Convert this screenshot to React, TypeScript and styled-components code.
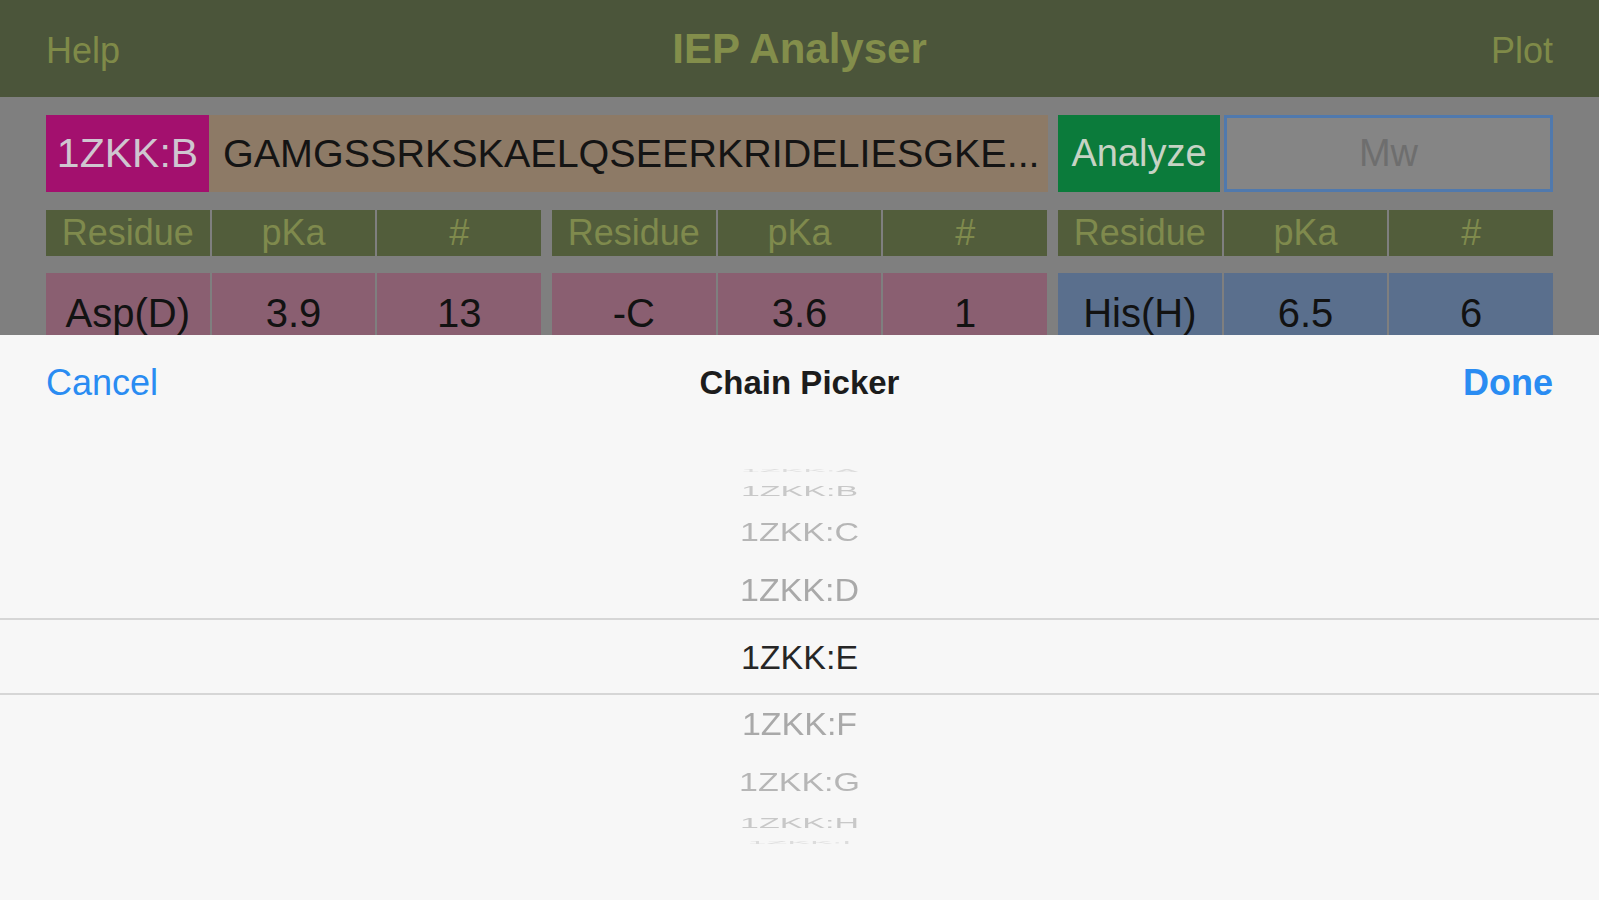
import styled, { createGlobalStyle } from 'styled-components';

const GlobalStyle = createGlobalStyle`
  html, body {
    margin: 0;
    padding: 0;
    overflow: hidden;
    background: #7f7f7f;
  }
  body {
    font-family: "Liberation Sans", Arial, Helvetica, sans-serif;
  }
`;

type Tone = 'acid' | 'base';

interface ResidueRow {
  name: string;
  pka: string;
  count: string;
  tone: Tone;
}

const residues: ResidueRow[] = [
  { name: 'Asp(D)', pka: '3.9', count: '13', tone: 'acid' },
  { name: '-C', pka: '3.6', count: '1', tone: 'acid' },
  { name: 'His(H)', pka: '6.5', count: '6', tone: 'base' },
];

const chains = ['1ZKK:A', '1ZKK:B', '1ZKK:C', '1ZKK:D', '1ZKK:E', '1ZKK:F', '1ZKK:G', '1ZKK:H', '1ZKK:I'];
const SELECTED = 4;
const RADIUS = 190;
const STEP = 21;

const toRad = (deg: number) => (deg * Math.PI) / 180;
const clamp = (v: number) => Math.max(-90, Math.min(90, v));

const shades = ['#262626', '#a9a9a9', '#b6b6b6', '#c8c8c8', '#dcdcdc'];

export default function App() {
  return (
    <Page>
      <GlobalStyle />
      <NavBar>
        <NavLink>Help</NavLink>
        <Title>IEP Analyser</Title>
        <NavLink $right>Plot</NavLink>
      </NavBar>

      <Content>
        <InputRow>
          <ChainTag>1ZKK:B</ChainTag>
          <Sequence>GAMGSSRKSKAELQSEERKRIDELIESGKE...</Sequence>
          <AnalyzeButton>Analyze</AnalyzeButton>
          <MwField>Mw</MwField>
        </InputRow>

        <TableRow>
          {[0, 1, 2].map((g) => (
            <Group key={g}>
              <HeadCell>Residue</HeadCell>
              <HeadCell>pKa</HeadCell>
              <HeadCell>#</HeadCell>
            </Group>
          ))}
        </TableRow>

        <DataRow>
          {residues.map((r) => (
            <Group key={r.name}>
              <DataCell $tone={r.tone}>{r.name}</DataCell>
              <DataCell $tone={r.tone}>{r.pka}</DataCell>
              <DataCell $tone={r.tone}>{r.count}</DataCell>
            </Group>
          ))}
        </DataRow>
      </Content>

      <Sheet>
        <Toolbar>
          <ToolButton>Cancel</ToolButton>
          <SheetTitle>Chain Picker</SheetTitle>
          <ToolButton $bold>Done</ToolButton>
        </Toolbar>

        <Picker>
          <SelectionLine style={{ top: 187 }} />
          <SelectionLine style={{ top: 262 }} />
          <Wheel>
            {chains.map((c, i) => {
              const offset = i - SELECTED;
              const angle = offset * STEP;
              const lo = clamp(angle - STEP / 2);
              const hi = clamp(angle + STEP / 2);
              const h = RADIUS * (Math.sin(toRad(hi)) - Math.sin(toRad(lo)));
              const scale = Math.cos(toRad(angle));
              const dist = Math.abs(offset);
              return (
                <WheelItem key={c} style={{ height: h }}>
                  <WheelText
                    $blur={dist >= 3}
                    style={{ transform: `scaleY(${scale})`, color: shades[dist] }}
                  >
                    {c}
                  </WheelText>
                </WheelItem>
              );
            })}
          </Wheel>
        </Picker>
      </Sheet>
    </Page>
  );
}

const Page = styled.div`
  position: relative;
  width: 100vw;
  height: 100vh;
  background: #7f7f7f;
  overflow: hidden;
`;

const NavBar = styled.header`
  height: 97px;
  background: #4b553a;
  display: grid;
  grid-template-columns: 1fr auto 1fr;
  align-items: center;
  padding: 0 46px;
  box-sizing: border-box;
`;

const NavLink = styled.span<{ $right?: boolean }>`
  font-size: 36px;
  color: #7f8a48;
  padding-top: 4px;
  justify-self: ${(p) => (p.$right ? 'end' : 'start')};
`;

const Title = styled.h1`
  margin: 0;
  font-size: 42px;
  font-weight: bold;
  color: #838e4b;
`;

const Content = styled.main`
  padding: 18px 46px 0 46px;
  display: flex;
  flex-direction: column;
`;

const InputRow = styled.div`
  height: 77px;
  display: flex;
  align-items: stretch;
`;

const ChainTag = styled.div`
  width: 163px;
  background: #a3106e;
  color: #cfc6d0;
  font-size: 41px;
  display: flex;
  align-items: center;
  justify-content: center;
`;

const Sequence = styled.div`
  flex: 1;
  min-width: 0;
  background: #8d7a66;
  color: #141414;
  font-size: 39.5px;
  display: flex;
  align-items: center;
  padding-left: 14px;
  white-space: nowrap;
  overflow: hidden;
`;

const AnalyzeButton = styled.div`
  width: 162px;
  margin-left: 10px;
  background: #0b7b3b;
  color: #c6d3c4;
  font-size: 38px;
  display: flex;
  align-items: center;
  justify-content: center;
`;

const MwField = styled.div`
  width: 329px;
  margin-left: 4px;
  box-sizing: border-box;
  border: 3px solid #5079ad;
  background: #858585;
  color: #6e6e6e;
  font-size: 38px;
  display: flex;
  align-items: center;
  justify-content: center;
`;

const TableRow = styled.div`
  margin-top: 18px;
  height: 46px;
  display: grid;
  grid-template-columns: repeat(3, 1fr);
  column-gap: 11px;
`;

const DataRow = styled(TableRow)`
  margin-top: 17px;
  height: 77px;
`;

const Group = styled.div`
  display: grid;
  grid-template-columns: repeat(3, 1fr);
  column-gap: 2px;
`;

const HeadCell = styled.div`
  background: #525d3b;
  color: #7f8a4d;
  font-size: 36px;
  display: flex;
  align-items: center;
  justify-content: center;
  overflow: hidden;
`;

const DataCell = styled.div<{ $tone: Tone }>`
  background: ${(p) => (p.$tone === 'acid' ? '#8a5f71' : '#5a6f8d')};
  color: #121212;
  font-size: 40px;
  display: flex;
  align-items: center;
  justify-content: center;
  padding-top: 4px;
`;

const Sheet = styled.section`
  position: absolute;
  left: 0;
  right: 0;
  top: 335px;
  bottom: 0;
  background: #f7f7f7;
  display: flex;
  flex-direction: column;
`;

const Toolbar = styled.div`
  height: 96px;
  flex-shrink: 0;
  display: grid;
  grid-template-columns: 1fr auto 1fr;
  align-items: center;
  padding: 0 46px;
`;

const ToolButton = styled.span<{ $bold?: boolean }>`
  font-size: 36px;
  font-weight: ${(p) => (p.$bold ? 'bold' : 'normal')};
  color: #2a8cf2;
  justify-self: ${(p) => (p.$bold ? 'end' : 'start')};
`;

const SheetTitle = styled.span`
  font-size: 33px;
  font-weight: bold;
  color: #1c1c1c;
`;

const Picker = styled.div`
  position: relative;
  padding-top: 36px;
`;

const SelectionLine = styled.div`
  position: absolute;
  left: 0;
  right: 0;
  height: 2px;
  background: #d6d6d6;
`;

const Wheel = styled.div`
  height: 380px;
  display: flex;
  flex-direction: column;
  align-items: center;
  overflow: hidden;
`;

const WheelItem = styled.div`
  display: flex;
  align-items: center;
  justify-content: center;
  flex-shrink: 0;
  overflow: visible;
`;

const WheelText = styled.span<{ $blur: boolean }>`
  font-size: 34px;
  line-height: 1;
  white-space: nowrap;
  filter: ${(p) => (p.$blur ? 'blur(0.6px)' : 'none')};
`;
